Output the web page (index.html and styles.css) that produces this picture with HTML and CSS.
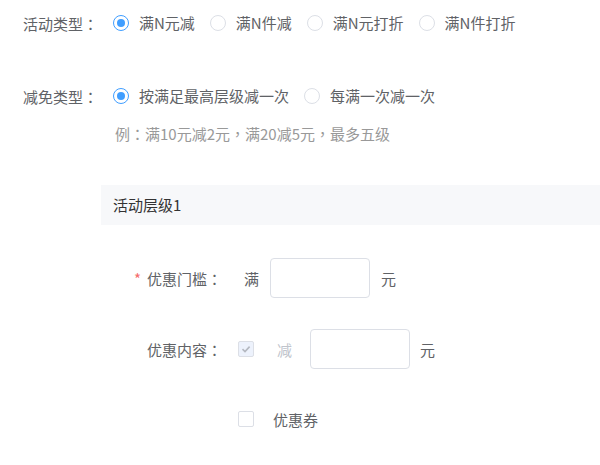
FILE: index.html
```html
<!DOCTYPE html>
<html lang="zh-CN">
<head>
<meta charset="utf-8">
<link rel="stylesheet" href="styles.css">
</head>
<body>
<div class="page">
  <div class="row">
    <div class="lbl">活动类型<span class="punc" lang="zh-TW">：</span></div>
    <div class="radios">
      <span class="radio checked"><span class="dot"></span><span class="rtext">满N元减</span></span>
      <span class="radio"><span class="dot"></span><span class="rtext">满N件减</span></span>
      <span class="radio"><span class="dot"></span><span class="rtext">满N元打折</span></span>
      <span class="radio"><span class="dot"></span><span class="rtext">满N件打折</span></span>
    </div>
  </div>
  <div class="row row2">
    <div class="lbl">减免类型<span class="punc" lang="zh-TW">：</span></div>
    <div class="radios">
      <span class="radio checked"><span class="dot"></span><span class="rtext">按满足最高层级减一次</span></span>
      <span class="radio"><span class="dot"></span><span class="rtext">每满一次减一次</span></span>
    </div>
  </div>
  <div class="hint">例<span class="punc" lang="zh-TW">：</span>满10元减2元<span class="punc" lang="zh-TW">，</span>满20减5元<span class="punc" lang="zh-TW">，</span>最多五级</div>
  <div class="panel">活动层级1</div>
  <div class="subrow sr1">
    <div class="sublbl"><span class="req">*</span>优惠门槛<span class="punc" lang="zh-TW">：</span></div>
    <div class="ctrl">
      <span class="pre">满</span>
      <span class="input"></span>
      <span class="post">元</span>
    </div>
  </div>
  <div class="subrow sr2">
    <div class="sublbl">优惠内容<span class="punc" lang="zh-TW">：</span></div>
    <div class="ctrl">
      <span class="cb checked disabled"><svg viewBox="0 0 16 16" width="16" height="16"><path d="M4.5 8.2 L7 10.6 L11.6 5.6" fill="none" stroke="#b4b8c0" stroke-width="1.6"/></svg></span>
      <span class="cbtext disabled-text">减</span>
      <span class="input input2"></span>
      <span class="post2">元</span>
    </div>
  </div>
  <div class="subrow sr3">
    <div class="sublbl"></div>
    <div class="ctrl">
      <span class="cb"></span>
      <span class="cbtext2">优惠券</span>
    </div>
  </div>
</div>
</body>
</html>
```

FILE: styles.css
```css
html, body {
  margin: 0;
  padding: 0;
  background: #fff;
}
body {
  font-family: "Noto Sans CJK SC", "Noto Sans", sans-serif;
  font-size: 15px;
  color: #606266;
}
.punc {
  font-family: "Noto Sans CJK TC", "Noto Sans CJK SC", sans-serif;
}
.page {
  padding: 3px 0 0 23px;
}
.row {
  display: flex;
  align-items: center;
  height: 40px;
}
.row2 {
  margin-top: 33px;
}
.lbl {
  width: 90px;
  flex: none;
}
.radios {
  display: flex;
  align-items: center;
}
.radio {
  display: inline-flex;
  align-items: center;
  margin-right: 15px;
}
.dot {
  width: 16px;
  height: 16px;
  box-sizing: border-box;
  border: 1px solid #dcdfe6;
  border-radius: 50%;
  display: inline-flex;
  align-items: center;
  justify-content: center;
  background: #fff;
}
.radio.checked .dot {
  border: 1.6px solid #409eff;
}
.radio.checked .dot::after {
  content: "";
  width: 8px;
  height: 8px;
  border-radius: 50%;
  background: #409eff;
}
.rtext {
  padding-left: 10px;
  line-height: 20px;
}
.hint {
  margin: 8px 0 0 92px;
  height: 20px;
  line-height: 20px;
  color: #999;
}
.panel {
  margin: 41px 0 0 78px;
  height: 40px;
  line-height: 40px;
  padding-left: 12px;
  background: #f7f8fa;
  color: #333;
}
.subrow {
  display: flex;
  align-items: center;
  height: 40px;
}
.sr1 { margin-top: 33px; }
.sr2 { margin-top: 31px; }
.sr3 { margin-top: 30px; }
.sublbl {
  width: 215px;
  flex: none;
  box-sizing: border-box;
  padding-right: 16px;
  text-align: right;
}
.req {
  color: #f56c6c;
  margin-right: 6px;
}
.ctrl {
  display: flex;
  align-items: center;
}
.pre {
  margin-left: 6px;
}
.input {
  width: 100px;
  height: 40px;
  box-sizing: border-box;
  border: 1px solid #dcdfe6;
  border-radius: 4px;
  background: #fff;
  margin: 0 11px;
}
.cb {
  width: 16px;
  height: 16px;
  box-sizing: border-box;
  border: 1px solid #dcdfe6;
  border-radius: 2px;
  background: #fff;
  display: inline-block;
  position: relative;
}
.cb svg {
  position: absolute;
  left: -1px;
  top: -1px;
}
.cb.disabled {
  background: #edf2fc;
}
.cbtext {
  margin-left: 23px;
}
.disabled-text {
  color: #c0c4cc;
}
.input2 {
  margin: 0 10px 0 18px;
}
.cbtext2 {
  margin-left: 19px;
}
```
